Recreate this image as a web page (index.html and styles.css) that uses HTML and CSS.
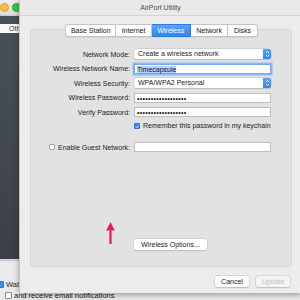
FILE: index.html
```html
<!DOCTYPE html>
<html lang="en">

<head>
    <meta charset="UTF-8">
    <title>AirPort Utility</title>
    <link rel="stylesheet" href="styles.css">
</head>

<body>
    <div class="desk">
        <div class="bg-title">
            <span class="light red"></span>
            <span class="light orange"></span>
            <span class="light green"></span>
        </div>
        <div class="sidebar">
            <div class="side-item">Other</div>
        </div>
        <div class="bg-sep"></div>
        <div class="bg-list">
            <div class="bg-row"><span class="bg-check on"></span>Watch</div>
            <div class="bg-row indent"><span class="bg-check"></span>and receive email notifications</div>
        </div>
    </div>

    <div class="window">
        <div class="titlebar">AirPort Utility</div>

        <div class="tabbox">
            <div class="tabs">
                <span class="tab">Base Station</span>
                <span class="tab">Internet</span>
                <span class="tab active">Wireless</span>
                <span class="tab">Network</span>
                <span class="tab">Disks</span>
            </div>

            <div class="form">
                <label>Network Mode:</label>
                <div class="popup">Create a wireless network<span class="stepper"><svg width="5" height="8" viewBox="0 0 5 8"><path d="M1 3 L2.5 1.5 L4 3 M1 5 L2.5 6.5 L4 5" fill="none" stroke="#fff" stroke-width="0.9"/></svg></span></div>

                <label>Wireless Network Name:</label>
                <div class="field focus"><span class="sel">Timecapsule</span></div>

                <label>Wireless Security:</label>
                <div class="popup">WPA/WPA2 Personal<span class="stepper"><svg width="5" height="8" viewBox="0 0 5 8"><path d="M1 3 L2.5 1.5 L4 3 M1 5 L2.5 6.5 L4 5" fill="none" stroke="#fff" stroke-width="0.9"/></svg></span></div>

                <label>Wireless Password:</label>
                <div class="field dots">••••••••••••••••••</div>

                <label>Verify Password:</label>
                <div class="field dots">••••••••••••••••••</div>

                <span></span>
                <div class="check-row"><span class="check on"><svg width="6" height="6" viewBox="0 0 6 6"><path d="M1.2 3.1 L2.5 4.4 L4.8 1.4" fill="none" stroke="#fff" stroke-width="1"/></svg></span>Remember this password in my keychain</div>

                <label class="guest"><span class="check"></span>Enable Guest Network:</label>
                <div class="field guest-field"></div>
            </div>

            <div class="options">
                <button class="btn">Wireless Options...</button>
            </div>
        </div>

        <div class="footer">
            <button class="btn">Cancel</button>
            <button class="btn disabled">Update</button>
        </div>
    </div>

    <svg class="arrow" width="11" height="24" viewBox="0 0 11 24">
        <path d="M5.5 1 L10 10 L6.6 9 L6.6 23 L4.4 23 L4.4 9 L1 10 Z" fill="#e8195d"/>
    </svg>
</body>

</html>
```

FILE: styles.css
```css
html,
body {
    margin: 0;
    padding: 0;
    width: 300px;
    height: 300px;
    overflow: hidden;
    font-family: 'Liberation Sans', Arial, sans-serif;
    font-size: 7px;
    color: #222;
}

.desk {
    display: flex;
    flex-direction: column;
    height: 300px;
    background: #ebebeb;
}

.bg-title {
    height: 16px;
    flex: none;
    display: flex;
    align-items: center;
    gap: 3px;
    margin-left: -10px;
    background: linear-gradient(#ececec, #dcdcdc);
    border-bottom: 1px solid #c9c9c9;
    box-sizing: border-box;
}

.light {
    width: 7px;
    height: 7px;
    border-radius: 50%;
}

.light.red {
    background: #fc605c;
}

.light.orange {
    background: #fdbc40;
    border: 0.5px solid #e0a02d;
}

.light.green {
    background: #34c84a;
    border: 0.5px solid #28a33a;
}

.sidebar {
    height: 243px;
    flex: none;
    padding-top: 8px;
    box-sizing: border-box;
    background: linear-gradient(#4a5058, #3b4048);
}

.side-item {
    height: 9px;
    line-height: 9px;
    padding-left: 9px;
    background: #fafafa;
    color: #333;
}

.bg-sep {
    height: 5px;
    background: #d9d9d9;
    border-bottom: 1px solid #c8c8c8;
}

.bg-list {
    padding-top: 18px;
}

.bg-row {
    display: flex;
    align-items: center;
    gap: 2px;
    height: 10px;
    margin-left: -3px;
    color: #222;
    font-size: 7.5px;
}

.bg-row.indent {
    margin-left: 5px;
    margin-top: 1px;
}

.bg-check {
    width: 5px;
    height: 5px;
    border: 0.5px solid #888;
    border-radius: 1px;
    background: #fff;
}

.bg-check.on {
    background: #3a8ef0;
    border-color: #2c77d8;
}

.window {
    position: absolute;
    left: 19px;
    top: 0;
    width: 281px;
    height: 293px;
    background: #ececec;
    border-left: 1px solid #c2c2c2;
    box-shadow: 0 2px 6px rgba(0, 0, 0, 0.35);
    display: flex;
    flex-direction: column;
}

.titlebar {
    height: 15px;
    line-height: 16px;
    text-align: center;
    color: #4a4a4a;
    background: #e9e9e9;
    border-bottom: 1px solid #d3d3d3;
    flex: none;
}

.tabbox {
    margin: 13px 9px 0 10px;
    height: 238px;
    box-sizing: border-box;
    background: #e2e2e2;
    border: 1px solid #d6d6d6;
    border-radius: 3px;
    display: flex;
    flex-direction: column;
}

.tabs {
    display: flex;
    justify-content: center;
    margin-top: -6px;
    padding-left: 1px;
}

.tab {
    height: 11px;
    line-height: 11px;
    padding: 0 5.5px;
    background: #fff;
    color: #222;
    border: 0.5px solid #c4c4c4;
    border-left: none;
    box-shadow: 0 0.5px 0 rgba(0, 0, 0, 0.12);
}

.tab:first-child {
    border-left: 0.5px solid #c4c4c4;
    border-radius: 3px 0 0 3px;
    padding: 0 4.5px;
}

.tab:last-child {
    border-radius: 0 3px 3px 0;
}

.tab.active {
    background: linear-gradient(#5aa2f7, #2f86f2);
    color: #fff;
    border-color: #2c7be0;
}

.form {
    display: grid;
    grid-template-columns: 99px 137px;
    column-gap: 4px;
    row-gap: 4.5px;
    margin-top: 12px;
    align-items: center;
}

.form label {
    text-align: right;
    color: #222;
}

.popup,
.field {
    height: 10px;
    line-height: 10px;
    box-sizing: border-box;
    background: #fff;
    border-radius: 2px;
    position: relative;
}

.popup {
    padding-left: 4px;
    box-shadow: 0 0 0 0.5px #c6c6c6, 0 0.5px 1px rgba(0, 0, 0, 0.2);
}

.stepper {
    position: absolute;
    right: 0;
    top: 0;
    width: 8px;
    height: 10px;
    border-radius: 0 2px 2px 0;
    background: linear-gradient(#5aa2f7, #2f86f2);
    display: flex;
    align-items: center;
    justify-content: center;
}

.field {
    border: 0.5px solid #bdbdbd;
    border-radius: 0;
    padding-left: 2px;
    line-height: 9px;
}

.field.focus {
    box-shadow: 0 0 0 1.5px #8bb8f3;
    border-color: #7aa9ea;
}

.sel {
    background: #b4d4fd;
    color: #111;
}

.dots {
    font-size: 7px;
    letter-spacing: 0.3px;
    color: #111;
}

.check-row {
    display: flex;
    align-items: center;
    gap: 3px;
    height: 8px;
    color: #222;
}

.check {
    width: 6px;
    height: 6px;
    box-sizing: border-box;
    border-radius: 1px;
    background: #fff;
    border: 0.5px solid #a8a8a8;
    display: inline-flex;
}

.check.on {
    background: #3a8ef0;
    border-color: #2c77d8;
}

.form .guest {
    display: flex;
    justify-content: flex-end;
    align-items: center;
    gap: 3px;
    margin-top: 8px;
}

.guest-field {
    margin-top: 8px;
}

.options {
    margin-top: auto;
    margin-bottom: 16px;
    padding-left: 103px;
}

.btn {
    font-family: 'Liberation Sans', Arial, sans-serif;
    font-size: 7px;
    height: 11px;
    line-height: 10px;
    padding: 0 7px;
    background: #fff;
    color: #222;
    border: none;
    border-radius: 2px;
    box-shadow: 0 0 0 0.5px #c8c8c8, 0 0.5px 1px rgba(0, 0, 0, 0.2);
}

.footer {
    display: flex;
    justify-content: flex-end;
    gap: 7px;
    margin-top: 9px;
    padding-right: 11px;
}

.footer .btn {
    width: 34px;
    padding: 0;
}

.btn.disabled {
    background: #f3f3f3;
    color: #c2c2c2;
}

.arrow {
    position: absolute;
    left: 105px;
    top: 221px;
}
```
